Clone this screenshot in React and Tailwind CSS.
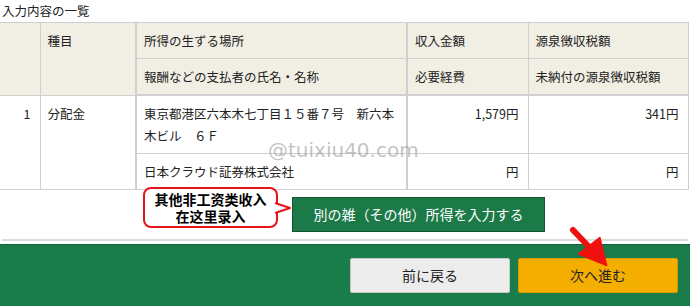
import React from 'react'

const jp = { fontFamily: '"Noto Sans CJK JP", "Noto Sans", sans-serif' }

const App = () => {
  const th = 'border border-[#cfcfcf] bg-[#f1efe4] px-[7px] pt-[7px] pb-[6px] text-left align-top font-normal leading-[22px]'
  const td = 'border border-[#cfcfcf] px-[7px] pt-[7px] pb-[6px] align-top leading-[22px]'

  return (
    <div className="relative w-[690px] h-[307px] overflow-hidden bg-white text-[12.5px] text-[#222]" style={jp}>
      {/* Title */}
      <div className="h-[22px] pl-[2px] pt-[2px] leading-[17px]">入力内容の一覧</div>

      {/* Table */}
      <div className="relative">
        <table className="w-[688px] border-collapse table-fixed">
          <colgroup>
            <col className="w-[40px]" />
            <col className="w-[96px]" />
            <col className="w-[271px]" />
            <col className="w-[121px]" />
            <col className="w-[160px]" />
          </colgroup>
          <thead>
            <tr>
              <th rowSpan={2} className={th + ' border-l-0'}></th>
              <th rowSpan={2} className={th}>種目</th>
              <th className={th + ' border-l-2'}>所得の生ずる場所</th>
              <th className={th + ' border-l-2'}>収入金額</th>
              <th className={th}>源泉徴収税額</th>
            </tr>
            <tr>
              <th className={th + ' border-l-2 border-b-2'}>報酬などの支払者の氏名・名称</th>
              <th className={th + ' border-l-2 border-b-2'}>必要経費</th>
              <th className={th + ' border-b-2'}>未納付の源泉徴収税額</th>
            </tr>
          </thead>
          <tbody>
            <tr>
              <td rowSpan={2} className={td + ' border-l-0 text-right pr-[9px]'}>1</td>
              <td rowSpan={2} className={td}>分配金</td>
              <td className={td + ' border-l-2'}>東京都港区六本木七丁目１５番７号　新六本木ビル　６Ｆ</td>
              <td className={td + ' border-l-2 text-right pr-[9px]'}>1,579円</td>
              <td className={td + ' text-right pr-[9px]'}>341円</td>
            </tr>
            <tr>
              <td className={td + ' border-l-2'}>日本クラウド証券株式会社</td>
              <td className={td + ' border-l-2 text-right pr-[9px]'}>円</td>
              <td className={td + ' text-right pr-[9px]'}>円</td>
            </tr>
          </tbody>
        </table>
        {/* Watermark */}
        <div
          className="absolute left-[268px] top-[116px] text-[20px] leading-[24px] text-[#9a9a9a]/60"
          style={{ fontFamily: '"DejaVu Sans", sans-serif' }}
        >
          @tuixiu40.com
        </div>
      </div>

      {/* Add other income row */}
      <div className="flex h-[49px] items-start pl-[143px]">
        <div className="relative mt-[-3px] flex h-[41px] w-[135px] flex-col items-center justify-center rounded-[8px] border-2 border-[#e5141b] bg-white text-[14px] font-bold leading-[17px] text-black" style={{ fontFamily: '"Noto Sans CJK SC", sans-serif' }}>
          <span>其他非工资类收入</span>
          <span>在这里录入</span>
          <svg className="absolute left-[129px] top-[12px]" width="18" height="18" viewBox="0 0 18 18">
            <path d="M1 2 L16 7 L1 12" fill="white" stroke="#e5141b" strokeWidth="2" strokeLinejoin="round" />
            <rect x="0" y="3" width="2" height="8" fill="white" />
          </svg>
        </div>
        <button className="ml-[14px] mt-[7px] h-[35px] w-[253px] border border-[#0f5630] bg-[#1b7a48] text-[14px] text-white">
          別の雑（その他）所得を入力する
        </button>
      </div>

      <div className="mx-[2px] h-[2px] bg-[#dcdcdc]"></div>

      {/* Footer */}
      <div className="mt-[3px] flex h-[62px] justify-end gap-[8px] border-t border-[#136338] bg-[#1b7c4b] pr-[12px] pt-[13px]">
        <button className="h-[35px] w-[160px] rounded-[2px] border border-[#c8c8c8] bg-[#ececec] text-[14px] text-[#222]">前に戻る</button>
        <button className="h-[35px] w-[160px] rounded-[2px] border border-[#d89a00] bg-[#f4ae00] text-[14px] text-[#222]">次へ進む</button>
      </div>

      {/* Red arrow */}
      <svg className="absolute left-[565px] top-[222px]" width="50" height="50" viewBox="0 0 50 50">
        <line x1="8" y1="8" x2="27" y2="28" stroke="#f01010" strokeWidth="6" strokeLinecap="round" />
        <path d="M13 32 L35 15 L42 44 Z" fill="#f01010" stroke="#f01010" strokeWidth="1" strokeLinejoin="round" />
      </svg>
    </div>
  )
}

export default App
